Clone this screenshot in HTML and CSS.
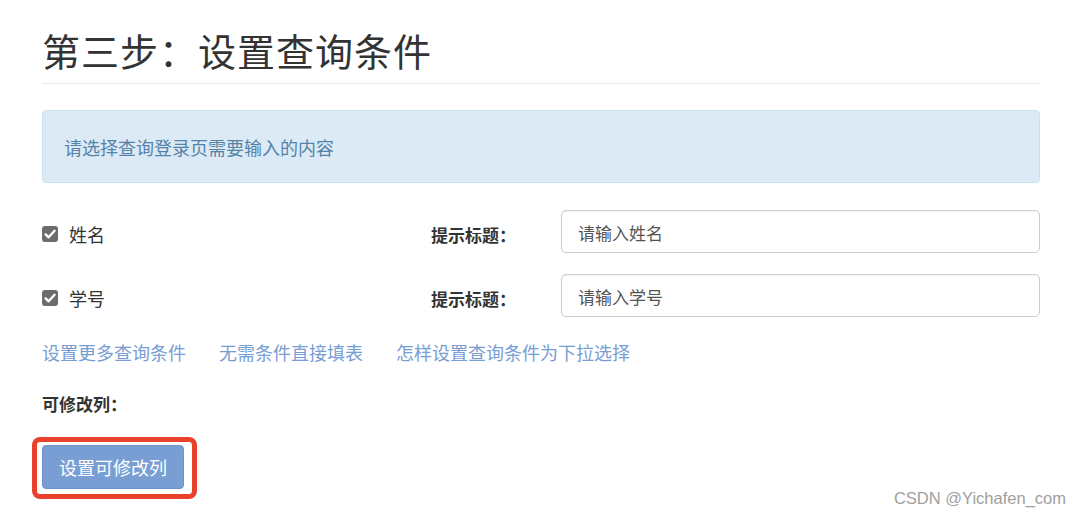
FILE: index.html
```html
<!DOCTYPE html>
<html lang="zh-CN">
<head>
<meta charset="utf-8">
<title>第三步：设置查询条件</title>
<link rel="stylesheet" href="styles.css">
</head>
<body>
<div class="page">
  <h1 class="title">第三步：设置查询条件</h1>
  <div class="alert">请选择查询登录页需要输入的内容</div>

  <div class="form-row">
    <label class="check"><span class="box"><svg viewBox="0 0 16 16" width="16" height="16"><path d="M3.6 8.4 L6.6 11.3 L12.6 4.8" fill="none" stroke="#fff" stroke-width="2.4" stroke-linecap="round" stroke-linejoin="round"/></svg></span>姓名</label>
    <span class="field-label">提示标题：</span>
    <div class="input">请输入姓名</div>
  </div>
  <div class="form-row">
    <label class="check"><span class="box"><svg viewBox="0 0 16 16" width="16" height="16"><path d="M3.6 8.4 L6.6 11.3 L12.6 4.8" fill="none" stroke="#fff" stroke-width="2.4" stroke-linecap="round" stroke-linejoin="round"/></svg></span>学号</label>
    <span class="field-label">提示标题：</span>
    <div class="input">请输入学号</div>
  </div>

  <div class="links">
    <a>设置更多查询条件</a>
    <a>无需条件直接填表</a>
    <a>怎样设置查询条件为下拉选择</a>
  </div>

  <div class="section-label">可修改列：</div>

  <div class="btn-wrap"><span class="btn">设置可修改列</span></div>
</div>
<div class="watermark">CSDN @Yichafen_com</div>
</body>
</html>
```

FILE: styles.css
```css
html, body {
  margin: 0;
  padding: 0;
  background: #fff;
}
body {
  font-family: "Noto Sans CJK SC", "Noto Sans", sans-serif;
  color: #333;
  width: 1080px;
  height: 516px;
  overflow: hidden;
  position: relative;
}
.page {
  padding: 0 40px 0 42px;
}
.title {
  margin: 29px 0 0 0;
  font-size: 38px;
  font-weight: 400;
  line-height: 42px;
  color: #333;
  padding-bottom: 12px;
  border-bottom: 1px solid #eaeaea;
  letter-spacing: 1px;
}
.alert {
  margin-top: 26px;
  height: 71px;
  line-height: 73px;
  padding: 0 21px;
  background: #dceaf5;
  border: 1px solid #c7e3ef;
  border-radius: 4px;
  color: #5483a9;
  font-size: 18px;
}
.form-row {
  display: grid;
  grid-template-columns: 389px 130px 1fr;
  align-items: center;
  margin-top: 27px;
}
.form-row + .form-row {
  margin-top: 21px;
}
.check {
  display: flex;
  align-items: center;
  font-size: 18px;
  color: #333;
  padding-top: 5px;
}
.box {
  width: 16px;
  height: 16px;
  background: #6c6c6c;
  border-radius: 3px;
  margin-right: 11px;
  display: inline-flex;
}
.field-label {
  font-size: 17px;
  font-weight: 700;
  color: #333;
  padding-top: 5px;
}
.input {
  height: 41px;
  line-height: 43px;
  border: 1px solid #ccc;
  border-radius: 5px;
  padding: 0 16px;
  font-size: 17px;
  color: #555;
  box-shadow: inset 0 1px 1px rgba(0,0,0,0.05);
}
.links {
  display: flex;
  gap: 33px;
  margin-top: 23px;
  line-height: 24px;
  font-size: 18px;
}
.links a {
  color: #779dd2;
  text-decoration: none;
}
.section-label {
  margin-top: 28px;
  line-height: 24px;
  font-size: 17px;
  font-weight: 700;
  color: #333;
}
.btn-wrap {
  display: inline-block;
  margin: 21px 0 0 -10px;
  border: 5px solid #e8412c;
  border-radius: 8px;
  padding: 3px 8px 5px 5px;
}
.btn {
  display: block;
  width: 140px;
  height: 42px;
  line-height: 42px;
  text-align: center;
  background: #799ed3;
  border: 1px solid #6d93c9;
  border-radius: 4px;
  color: #fff;
  font-size: 18px;
}
.watermark {
  position: absolute;
  right: 14px;
  top: 489px;
  font-family: "Liberation Sans", Arial, sans-serif;
  font-size: 16.5px;
  color: #a0a0a0;
}
```
